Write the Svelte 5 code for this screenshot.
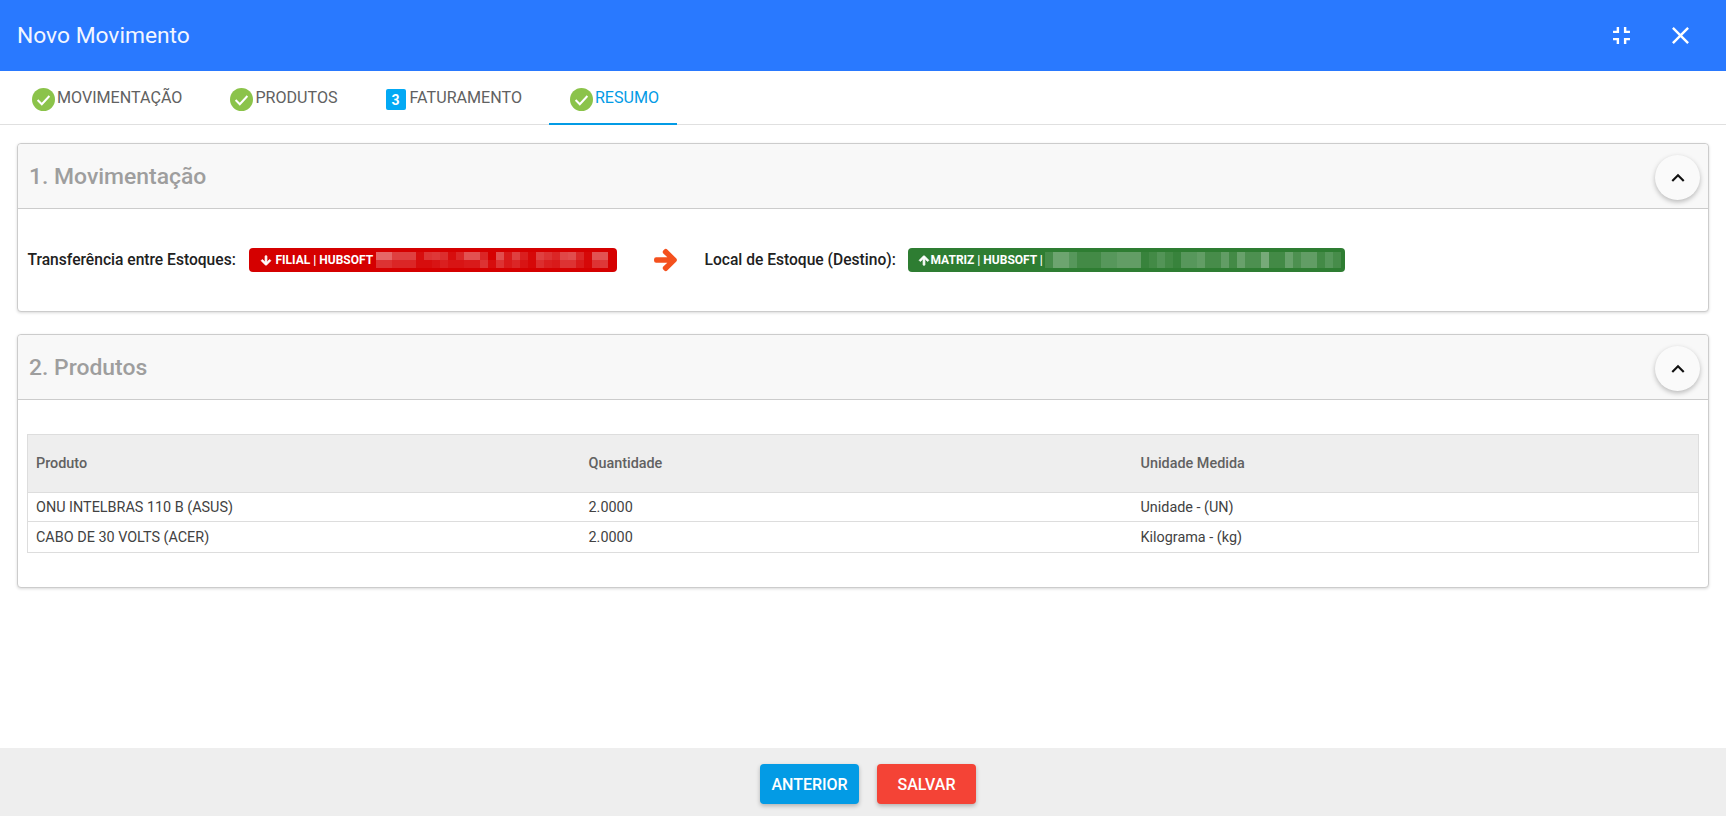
<script>
  const tabs = [
    { label: 'MOVIMENTAÇÃO', kind: 'check' },
    { label: 'PRODUTOS', kind: 'check' },
    { label: 'FATURAMENTO', kind: 'num' },
    { label: 'RESUMO', kind: 'check', active: true }
  ];
  const redTop = [.4,.4,.25,.25,.25,.05,.2,.22,.18,.05,.15,.32,.32,.15,0,.3,.1,.25,.12,.03,.25,.2,.15,.28,.3,.15,.03,.32,.32];
  const redBot = [.2,.2,.15,.15,.15,.05,.05,.08,.12,.08,.08,.1,.1,.2,.05,.2,.1,.15,.08,.03,.18,.12,.1,.2,.2,.1,.03,.2,.22];
  const green = [.12,.3,.3,.2,.1,.1,.1,.2,.2,.25,.25,.25,.05,.1,.18,.1,.05,.2,.2,.25,.12,.12,.25,.1,.28,.15,.15,.35,.1,.1,.28,.15,.25,.25,.1,.2,.12];
  const rows = [
    ['ONU INTELBRAS 110 B (ASUS)', '2.0000', 'Unidade - (UN)'],
    ['CABO DE 30 VOLTS (ACER)', '2.0000', 'Kilograma - (kg)']
  ];
  const arrow = 'M190.5 66.9l22.2-22.2c9.4-9.4 24.6-9.4 33.9 0L441 239c9.4 9.4 9.4 24.6 0 33.9L246.6 467.3c-9.4 9.4-24.6 9.4-33.9 0l-22.2-22.2c-9.5-9.5-9.3-25 .4-34.3L311.4 296H24c-13.3 0-24-10.7-24-24v-32c0-13.3 10.7-24 24-24h287.4L190.9 101.2c-9.8-9.3-10-24.8-.4-34.3z';
</script>

<div class="page">
  <header class="topbar">
    <h1>Novo Movimento</h1>
    <div class="actions">
      <svg viewBox="0 0 24 24" class="top-icon"><path d="M5 16h3v3h2v-5H5v2zm3-8H5v2h5V5H8v3zm6 11h2v-3h3v-2h-5v5zm2-11V5h-2v5h5V8h-3z"/></svg>
      <svg viewBox="0 0 24 24" class="top-icon"><path d="M19 6.41L17.59 5 12 10.59 6.41 5 5 6.41 10.59 12 5 17.59 6.41 19 12 13.41 17.59 19 19 17.59 13.41 12z"/></svg>
    </div>
  </header>

  <nav class="tabs">
    {#each tabs as t}
      <div class="tab" class:active={t.active}>
        {#if t.kind === 'check'}
          <svg viewBox="0 0 23 23" class="check"><circle cx="11.5" cy="11.5" r="11.5" fill="#8bc34a"/><path d="M5.6 12l4.2 4.2 7.6-8.2" fill="none" stroke="#fff" stroke-width="2"/></svg>
        {:else}
          <span class="num">3</span>
        {/if}
        <span>{t.label}</span>
      </div>
    {/each}
  </nav>

  <main class="content">
    <section class="card">
      <div class="card-head">
        <h2>1. Movimentação</h2>
        <button class="toggle" aria-label="Recolher"><svg viewBox="0 0 24 24"><path d="M12 8l-6 6 1.41 1.41L12 10.83l4.59 4.58L18 14z"/></svg></button>
      </div>
      <div class="move">
        <span class="lbl lbl-from">Transferência entre Estoques:</span>
        <div class="badge red">
          <svg viewBox="0 0 448 512" class="mini down"><path d={arrow}/></svg>
          <span class="btxt">FILIAL | HUBSOFT</span>
          <div class="pix p-red">
            {#each redTop as a}<i style="opacity:{a}"></i>{/each}
            {#each redBot as a}<i style="opacity:{a}"></i>{/each}
          </div>
        </div>
        <svg viewBox="0 0 448 512" class="big-arrow"><path d={arrow}/></svg>
        <span class="lbl lbl-to">Local de Estoque (Destino):</span>
        <div class="badge grn">
          <svg viewBox="0 0 448 512" class="mini up"><path d={arrow}/></svg>
          <span class="btxt">MATRIZ | HUBSOFT |</span>
          <div class="pix p-grn">
            {#each green as a}<i style="opacity:{a}"></i>{/each}
            {#each green as a}<i style="opacity:{a}"></i>{/each}
          </div>
        </div>
      </div>
    </section>

    <section class="card">
      <div class="card-head">
        <h2>2. Produtos</h2>
        <button class="toggle" aria-label="Recolher"><svg viewBox="0 0 24 24"><path d="M12 8l-6 6 1.41 1.41L12 10.83l4.59 4.58L18 14z"/></svg></button>
      </div>
      <div class="table-wrap">
        <table>
          <colgroup><col class="c1" /><col class="c2" /><col /></colgroup>
          <thead><tr><th>Produto</th><th>Quantidade</th><th>Unidade Medida</th></tr></thead>
          <tbody>
            {#each rows as r}
              <tr>{#each r as c}<td>{c}</td>{/each}</tr>
            {/each}
          </tbody>
        </table>
      </div>
    </section>
  </main>

  <footer class="foot">
    <button class="btn blue">ANTERIOR</button>
    <button class="btn redbtn">SALVAR</button>
  </footer>
</div>

<style>
  :global(body) { margin: 0; background: #fff; font-family: Roboto, "Liberation Sans", sans-serif; }
  .page { height: 816px; display: flex; flex-direction: column; overflow: hidden; }
  .topbar { height: 71px; background: #2979ff; display: flex; align-items: center; justify-content: space-between; padding: 0 31px 0 17px; color: #fff; flex: none; }
  h1 { margin: 0; font-size: 22.8px; font-weight: 400; color: #f2f6ff; }
  .actions { display: flex; gap: 30px; }
  .top-icon { width: 29px; height: 29px; fill: #fff; display: block; }

  .tabs { height: 53px; border-bottom: 1px solid #e0e0e0; display: flex; gap: 9px; padding-left: 11px; flex: none; color: #616161; font-size: 16.1px; }
  .tab { display: flex; align-items: center; padding: 0 18px 0 21px; gap: 2px; margin-bottom: -1px; border-bottom: 2px solid transparent; box-sizing: border-box; height: 54px; }
  .tab.active { color: #039be5; border-bottom-color: #039be5; }
  .check { width: 23px; height: 23px; display: block; margin-top: 5px; }
  .num { width: 20px; height: 21px; margin: 5px 2px 0 0; background: #03a9f4; color: #fff; font-weight: 700; font-size: 14px; display: flex; align-items: center; justify-content: center; border-radius: 2px; }

  .content { flex: 1; padding: 18px 17px 0; display: flex; flex-direction: column; gap: 22px; }
  .card { border: 1px solid #ccc; border-radius: 4px; box-shadow: 0 1px 3px rgba(0,0,0,.15); background: #fff; }
  .card-head { height: 64px; background: #f8f8f8; border-bottom: 1px solid #ccc; border-radius: 4px 4px 0 0; display: flex; align-items: center; justify-content: space-between; padding: 0 8px 0 11px; }
  h2 { margin: 0; font-size: 22.9px; font-weight: 500; color: #9e9e9e; }
  .toggle { width: 45px; height: 45px; margin-top: 3px; border: 0; border-radius: 50%; padding: 0; background: #fafafa; box-shadow: 0 2px 5px rgba(0,0,0,.26); display: flex; align-items: center; justify-content: center; }
  .toggle svg { width: 26px; height: 26px; fill: #111; display: block; }

  .move { display: flex; align-items: center; padding: 39px 10px 39px 9.5px; }
  .lbl { font-size: 15.6px; font-weight: 500; color: #212121; white-space: nowrap; }
  .lbl-from { width: 221px; }
  .lbl-to { width: 203px; }
  .badge { height: 24px; border-radius: 4px; display: flex; align-items: center; box-sizing: border-box; color: #fff; }
  .red { width: 368px; background: #d50000; padding-left: 12px; }
  .grn { width: 437px; background: #2e7d32; padding-left: 11px; }
  .mini { width: 10px; height: 11px; fill: #fff; stroke: #fff; stroke-width: 40px; overflow: visible; flex: none; }
  .down { transform: rotate(90deg); }
  .up { transform: rotate(-90deg); }
  .btxt { font-size: 12px; font-weight: 700; white-space: nowrap; }
  .red .btxt { margin-left: 5px; width: 100px; }
  .grn .btxt { margin-left: 2px; width: 114px; }
  .pix { display: grid; grid-auto-rows: 8px; filter: blur(.5px); }
  .p-red { grid-template-columns: repeat(29, 8px); }
  .p-grn { grid-template-columns: repeat(37, 8px); }
  .pix i { display: block; background: #fff; }
  .big-arrow { width: 21px; height: 24px; fill: #f4511e; stroke: #f4511e; stroke-width: 40px; overflow: visible; margin: 0 29px 0 38px; flex: none; }

  .table-wrap { padding: 34px 9px; }
  table { width: 100%; border-collapse: collapse; table-layout: fixed; border: 1px solid #ddd; font-size: 14.4px; }
  .c1 { width: 553px; }
  .c2 { width: 552px; }
  th { height: 57px; padding: 0 0 0 8px; background: #eee; text-align: left; font-weight: 500; color: #616161; border-bottom: 1px solid #ddd; }
  td { height: 28px; padding: 0 0 0 8px; color: #424242; border-bottom: 1px solid #ddd; }
  tbody tr:last-child td { height: 30px; }

  .foot { height: 68px; background: #eee; display: flex; justify-content: center; gap: 18px; padding: 16px 0 0 10px; box-sizing: border-box; flex: none; }
  .btn { width: 99px; height: 40px; border: 0; border-radius: 4px; color: #fff; font-family: inherit; font-weight: 500; font-size: 16px; padding: 0; box-shadow: 0 2px 4px rgba(0,0,0,.25); }
  .blue { background: #039be5; }
  .redbtn { background: #f44336; }
</style>
